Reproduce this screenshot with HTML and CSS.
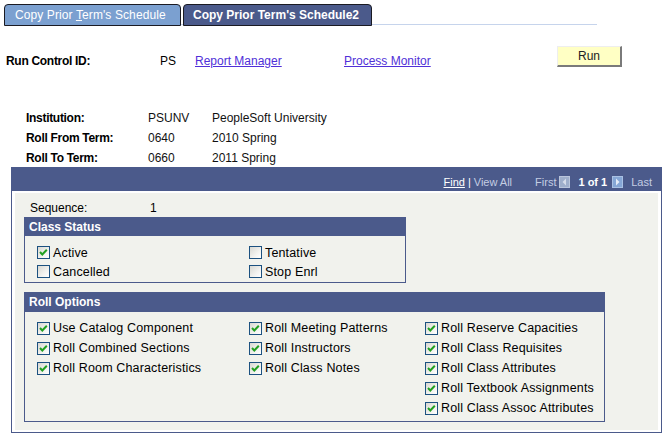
FILE: index.html
```html
<!DOCTYPE html>
<html>
<head>
<meta charset="utf-8">
<link rel="stylesheet" href="styles.css">
</head>
<body>
<div class="tabbar">
  <div class="tab tab-inactive">Copy Prior <u>T</u>erm's Schedule</div>
  <div class="tab tab-active">Copy Prior Term's Schedule2</div>
</div>

<div class="runbar">
  <span class="rc-label">Run Control ID:</span>
  <span class="rc-value">PS</span>
  <a class="link link-rm" href="#">Report Manager</a>
  <a class="link link-pm" href="#">Process Monitor</a>
  <button class="run-btn">Run</button>
</div>

<div class="info">
  <span class="info-label">Institution:</span><span class="info-val">PSUNV</span><span class="info-val">PeopleSoft University</span>
  <span class="info-label">Roll From Term:</span><span class="info-val">0640</span><span class="info-val">2010 Spring</span>
  <span class="info-label">Roll To Term:</span><span class="info-val">0660</span><span class="info-val">2011 Spring</span>
</div>

<div class="panel">
  <div class="panel-head">
    <a class="find" href="#">Find</a><span class="sep">|</span><span class="dim">View All</span>
    <span class="dim first">First</span>
    <svg class="nav-ico" width="11" height="12" viewBox="0 0 11 12"><rect x="0.5" y="0.5" width="10" height="11" fill="#9eaecb" stroke="#b9c5dc"/><polygon points="7,2.5 7,9.5 3.5,6" fill="#d5dcea"/></svg>
    <span class="count">1 of 1</span>
    <svg class="nav-ico" width="11" height="12" viewBox="0 0 11 12"><rect x="0.5" y="0.5" width="10" height="11" fill="#86a7d6" stroke="#a9c1e4"/><polygon points="4,2.5 4,9.5 7.5,6" fill="#e4ecf8"/></svg>
    <span class="dim last">Last</span>
  </div>
  <div class="panel-body">
    <div class="gray">
      <div class="seq"><span class="seq-label">Sequence:</span><span>1</span></div>

      <div class="group cs">
        <div class="group-head">Class Status</div>
        <div class="group-body">
          <div class="col col-a">
            <div class="cbx"><span class="box"><svg width="11" height="11" viewBox="0 0 11 11"><polyline points="2,5 4.3,7.5 8.8,2.8" fill="none" stroke="#22a022" stroke-width="2"/></svg></span>Active</div>
            <div class="cbx"><span class="box"></span>Cancelled</div>
          </div>
          <div class="col">
            <div class="cbx"><span class="box"></span>Tentative</div>
            <div class="cbx"><span class="box"></span>Stop Enrl</div>
          </div>
        </div>
      </div>

      <div class="group ro">
        <div class="group-head">Roll Options</div>
        <div class="group-body ro-body">
          <div class="col col-a">
            <div class="cbx"><span class="box"><svg width="11" height="11" viewBox="0 0 11 11"><polyline points="2,5 4.3,7.5 8.8,2.8" fill="none" stroke="#22a022" stroke-width="2"/></svg></span>Use Catalog Component</div>
            <div class="cbx"><span class="box"><svg width="11" height="11" viewBox="0 0 11 11"><polyline points="2,5 4.3,7.5 8.8,2.8" fill="none" stroke="#22a022" stroke-width="2"/></svg></span>Roll Combined Sections</div>
            <div class="cbx"><span class="box"><svg width="11" height="11" viewBox="0 0 11 11"><polyline points="2,5 4.3,7.5 8.8,2.8" fill="none" stroke="#22a022" stroke-width="2"/></svg></span>Roll Room Characteristics</div>
          </div>
          <div class="col col-b">
            <div class="cbx"><span class="box"><svg width="11" height="11" viewBox="0 0 11 11"><polyline points="2,5 4.3,7.5 8.8,2.8" fill="none" stroke="#22a022" stroke-width="2"/></svg></span>Roll Meeting Patterns</div>
            <div class="cbx"><span class="box"><svg width="11" height="11" viewBox="0 0 11 11"><polyline points="2,5 4.3,7.5 8.8,2.8" fill="none" stroke="#22a022" stroke-width="2"/></svg></span>Roll Instructors</div>
            <div class="cbx"><span class="box"><svg width="11" height="11" viewBox="0 0 11 11"><polyline points="2,5 4.3,7.5 8.8,2.8" fill="none" stroke="#22a022" stroke-width="2"/></svg></span>Roll Class Notes</div>
          </div>
          <div class="col">
            <div class="cbx"><span class="box"><svg width="11" height="11" viewBox="0 0 11 11"><polyline points="2,5 4.3,7.5 8.8,2.8" fill="none" stroke="#22a022" stroke-width="2"/></svg></span>Roll Reserve Capacities</div>
            <div class="cbx"><span class="box"><svg width="11" height="11" viewBox="0 0 11 11"><polyline points="2,5 4.3,7.5 8.8,2.8" fill="none" stroke="#22a022" stroke-width="2"/></svg></span>Roll Class Requisites</div>
            <div class="cbx"><span class="box"><svg width="11" height="11" viewBox="0 0 11 11"><polyline points="2,5 4.3,7.5 8.8,2.8" fill="none" stroke="#22a022" stroke-width="2"/></svg></span>Roll Class Attributes</div>
            <div class="cbx"><span class="box"><svg width="11" height="11" viewBox="0 0 11 11"><polyline points="2,5 4.3,7.5 8.8,2.8" fill="none" stroke="#22a022" stroke-width="2"/></svg></span>Roll Textbook Assignments</div>
            <div class="cbx"><span class="box"><svg width="11" height="11" viewBox="0 0 11 11"><polyline points="2,5 4.3,7.5 8.8,2.8" fill="none" stroke="#22a022" stroke-width="2"/></svg></span>Roll Class Assoc Attributes</div>
          </div>
        </div>
      </div>
    </div>
  </div>
</div>
</body>
</html>
```

FILE: styles.css
```css
* { box-sizing: border-box; }

body {
  margin: 0;
  background: #ffffff;
  font-family: "Liberation Sans", Arial, sans-serif;
  font-size: 12px;
  color: #000000;
}

/* Tabs */
.tabbar {
  display: flex;
  margin: 4px 0 0 4px;
  width: 593px;
  height: 21px;
  border-bottom: 1px solid #c6d4ec;
}
.tab {
  height: 22px;
  margin-bottom: -1px;
  border: 1px solid #1a1a22;
  border-radius: 4px 4px 0 0;
  color: #ffffff;
  line-height: 20px;
  white-space: nowrap;
}
.tab-inactive {
  width: 177px;
  padding-left: 10px;
  background: #7ba0d0;
  letter-spacing: 0.1px;
}
.tab-active {
  width: 189px;
  margin-left: 2px;
  padding-left: 9px;
  background: #4b5a8b;
  font-weight: bold;
}

/* Run control bar */
.runbar {
  display: flex;
  align-items: flex-start;
  margin-top: 20px;
  line-height: 14px;
}
.rc-label {
  margin-left: 6px;
  width: 154px;
  padding-top: 9px;
  font-weight: bold;
  letter-spacing: -0.3px;
}
.rc-value {
  width: 35px;
  padding-top: 9px;
}
.link {
  padding-top: 9px;
  color: #5030d8;
  text-decoration: underline;
}
.link-rm { width: 149px; }
.link-pm { width: 213px; }
.run-btn {
  width: 65px;
  height: 21px;
  margin-top: 1px;
  padding: 0;
  background: #ffffc4;
  border-style: solid;
  border-width: 1px 2px 2px 1px;
  border-color: #eeeeee #7a7a7a #7a7a7a #eeeeee;
  font-family: "Liberation Sans", Arial, sans-serif;
  font-size: 12px;
  color: #222222;
}

/* Info */
.info {
  display: grid;
  grid-template-columns: 122px 64px auto;
  margin: 40px 0 0 26px;
  line-height: 20px;
}
.info-label { font-weight: bold; letter-spacing: -0.3px; }
.info-val { color: #111111; }

/* Panel */
.panel {
  margin-left: 11px;
  margin-top: -1px;
  width: 651px;
  border: 1px solid #4b5a8b;
}
.panel-head {
  display: flex;
  align-items: flex-start;
  justify-content: flex-end;
  height: 23px;
  padding: 7px 9px 0 0;
  background: #4b5a8b;
  font-size: 11px;
  line-height: 14px;
  color: #ffffff;
}
.find { color: #ffffff; text-decoration: underline; }
.sep { margin: 0 3px 0 3px; color: #ffffff; }
.dim { color: #c4cde3; }
.first { margin-left: 23px; margin-right: 3px; }
.nav-ico { display: block; margin-top: 1px; }
.count { margin: 0 5px 0 8px; font-weight: bold; color: #ffffff; }
.last { margin-left: 8px; }

.panel-body {
  padding: 2px 3px 2px 3px;
}
.gray {
  background: #f1f2ed;
  padding: 7px 0 8px 9px;
}
.seq {
  display: flex;
  padding-left: 6px;
  line-height: 16px;
}
.seq-label { width: 120px; }

/* Groups */
.group {
  border: 1px solid #4b5a8b;
}
.group-head {
  background: #4b5a8b;
  color: #ffffff;
  font-weight: bold;
  padding-left: 4px;
}
.cs {
  width: 382px;
  margin-top: 1px;
}
.cs .group-head { height: 18px; line-height: 18px; }
.group-body {
  display: flex;
  padding: 7px 0 1px 12px;
}
.cs .cbx { height: 19px; }
.col-a { width: 212px; }
.col-b { width: 176px; }

.ro {
  width: 581px;
  margin-top: 9px;
}
.ro .group-head { height: 19px; line-height: 19px; }
.ro-body { padding: 6px 0 3px 12px; }

.cbx {
  display: flex;
  align-items: center;
  height: 20px;
  white-space: nowrap;
  font-size: 12.5px;
  letter-spacing: 0.15px;
}
.box {
  display: flex;
  align-items: center;
  justify-content: center;
  width: 13px;
  height: 13px;
  margin-right: 3px;
  border: 1px solid #1c5180;
  background: linear-gradient(135deg, #d8d8d2 0%, #f2f2ef 60%, #ffffff 100%);
}
.box svg { display: block; }
```
